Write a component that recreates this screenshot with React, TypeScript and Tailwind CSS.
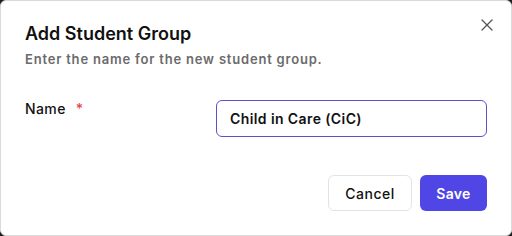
import { X } from 'lucide-react'

export default function App() {
  return (
    <div className="w-[512px] h-[236px] bg-[#1f1f1f] font-['Inter',sans-serif]">
      <div className="flex h-full w-full flex-col rounded-[6px] border border-[#dadada] bg-white px-6 pt-[19px]">
        <div className="flex items-start justify-between">
          <div>
            <h2 className="text-[18px] font-semibold leading-[28px] text-[#111]">Add Student Group</h2>
            <p className="mt-[1px] text-[13px] font-semibold leading-[20px] tracking-[0.8px] text-[#6b6b6b]">
              Enter the name for the new student group.
            </p>
          </div>
          <button className="-mt-[5px] -mr-[10px] text-[#555]">
            <X size={20} strokeWidth={1.5} />
          </button>
        </div>

        <div className="mt-[31px] flex items-start justify-between">
          <label className="-mt-[1px] flex items-start gap-[10px] text-[14px] font-medium leading-[20px] tracking-[0.4px] text-[#111]">
            Name <span className="text-[14px] text-[#e5484d]">*</span>
          </label>
          <input
            defaultValue="Child in Care (CiC)"
            className="h-[37px] w-[271px] rounded-[6px] border border-[#5b52c9] px-[13px] text-[14px] font-semibold tracking-[0.4px] text-[#111] outline-none"
          />
        </div>

        <div className="mt-[38px] flex justify-end gap-[8px]">
          <button className="h-[36px] w-[84px] rounded-[6px] border border-[#e3e3e3] bg-white text-[14px] font-medium tracking-[0.5px] text-[#111]">
            Cancel
          </button>
          <button className="h-[36px] w-[67px] rounded-[6px] bg-[#4f46e5] text-[14px] font-semibold tracking-[0.3px] text-white">
            Save
          </button>
        </div>
      </div>
    </div>
  )
}
